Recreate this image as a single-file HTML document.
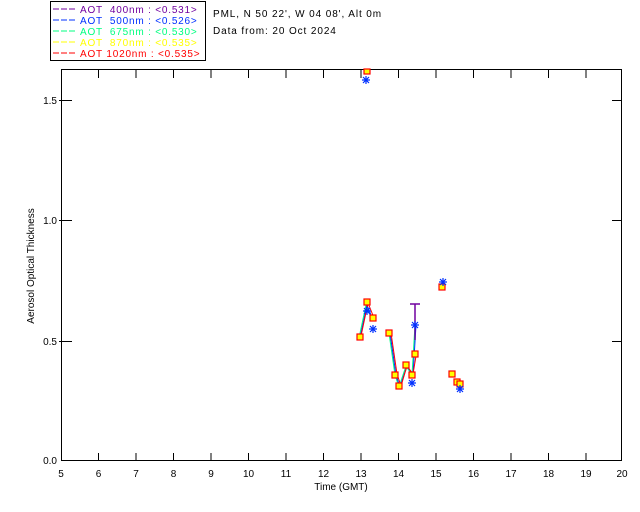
<!DOCTYPE html>
<html><head><style>
body{margin:0;background:#fff;width:640px;height:512px;overflow:hidden}
svg{display:block}
text{font-family:"Liberation Sans",sans-serif;font-size:10px}
</style></head><body>
<svg width="640" height="512" viewBox="0 0 640 512">
<rect x="50.5" y="1.5" width="155" height="59" fill="none" stroke="#000"/>
<g font-size="10" letter-spacing="0.8">
<line x1="53" y1="9" x2="75" y2="9" stroke="#70009f" stroke-dasharray="6,2"/><text x="80" y="13" fill="#70009f" xml:space="preserve">AOT  400nm : &lt;0.531&gt;</text>
<line x1="53" y1="20" x2="75" y2="20" stroke="#0030ff" stroke-dasharray="6,2"/><text x="80" y="24" fill="#0030ff" xml:space="preserve">AOT  500nm : &lt;0.526&gt;</text>
<line x1="53" y1="31" x2="75" y2="31" stroke="#00ff80" stroke-dasharray="6,2"/><text x="80" y="35" fill="#00ff80" xml:space="preserve">AOT  675nm : &lt;0.530&gt;</text>
<line x1="53" y1="42" x2="75" y2="42" stroke="#ffff00" stroke-dasharray="6,2"/><text x="80" y="46" fill="#ffff00" xml:space="preserve">AOT  870nm : &lt;0.535&gt;</text>
<line x1="53" y1="53" x2="75" y2="53" stroke="#ff0000" stroke-dasharray="6,2"/><text x="80" y="57" fill="#ff0000" xml:space="preserve">AOT 1020nm : &lt;0.535&gt;</text>
</g>
<g letter-spacing="0.9">
<text x="213" y="17">PML, N 50 22', W 04 08', Alt 0m</text>
<text x="213" y="34">Data from: 20 Oct 2024</text>
</g>
<rect x="61.5" y="69.5" width="560" height="391" fill="none" stroke="#000"/>
<g stroke="#000">
<path d="M98.5 461v-8M136 461v-8M173.5 461v-8M211 461v-8M248.5 461v-8M286 461v-8M323.5 461v-8M361 461v-8M398.5 461v-8M436 461v-8M473.5 461v-8M511 461v-8M548.5 461v-8M586 461v-8"/>
<path d="M98.5 70v8M136 70v8M173.5 70v8M211 70v8M248.5 70v8M286 70v8M323.5 70v8M361 70v8M398.5 70v8M436 70v8M473.5 70v8M511 70v8M548.5 70v8M586 70v8"/>
<path d="M59 100.5h13M59 220.5h13M59 341.5h13M612 100.5h10M612 220.5h10M612 341.5h10"/>
</g>
<g text-anchor="end"><text x="57" y="104">1.5</text><text x="57" y="224">1.0</text><text x="57" y="345">0.5</text><text x="57" y="464">0.0</text></g>
<g text-anchor="middle">
<text x="61" y="477">5</text><text x="98.5" y="477">6</text><text x="136" y="477">7</text><text x="173.5" y="477">8</text><text x="211" y="477">9</text><text x="248.5" y="477">10</text><text x="286" y="477">11</text><text x="323.5" y="477">12</text><text x="361" y="477">13</text><text x="398.5" y="477">14</text><text x="436" y="477">15</text><text x="473.5" y="477">16</text><text x="511" y="477">17</text><text x="548.5" y="477">18</text><text x="586" y="477">19</text><text x="622" y="477">20</text>
<text x="341" y="490">Time (GMT)</text>
</g>
<text transform="translate(34,266) rotate(-90)" text-anchor="middle">Aerosol Optical Thickness</text>
<g fill="none" stroke-width="1">
<polyline points="359,338 366,305 372,320" stroke="#00ff80"/>
<polyline points="389,333 395,375 399,387 406,366 412,375 415,325" stroke="#00ff80"/>
<polyline points="360,338 367,305 373,320" stroke="#0030ff"/>
<polyline points="390,333 396,375 400,387 407,366 413,375 416,325" stroke="#0030ff"/>
<polyline points="361,336 368,303 374,318" stroke="#ff0000"/>
<polyline points="391,333 397,374 401,386 407,366 413,374 416,356" stroke="#ff0000"/>
<line x1="415" y1="304" x2="415" y2="340" stroke="#70009f" stroke-width="1.5"/>
<line x1="410" y1="304" x2="420" y2="304" stroke="#70009f" stroke-width="1.5"/>
</g>
<g fill="#ff0" stroke="#f00" stroke-width="1.2">
<rect x="364" y="69" width="6" height="5"/>
<rect x="357" y="334" width="6" height="6"/><rect x="364" y="299" width="6" height="6"/><rect x="370" y="315" width="6" height="6"/>
<rect x="386" y="330" width="6" height="6"/><rect x="392" y="372" width="6" height="6"/><rect x="396" y="383" width="6" height="6"/>
<rect x="403" y="362" width="6" height="6"/><rect x="409" y="372" width="6" height="6"/><rect x="412" y="351" width="6" height="6"/>
<rect x="439" y="284" width="6" height="6"/><rect x="449" y="371" width="6" height="6"/><rect x="454" y="379" width="6" height="6"/><rect x="457" y="381" width="6" height="6"/>
</g>
<g stroke="#0030ff" stroke-width="1.2">
<path d="M363 77l6 6M369 77l-6 6M366 76v8M362 80h8"/>
<path d="M440 279l6 6M446 279l-6 6M443 278v8M439 282h8"/>
<path d="M412 322l6 6M418 322l-6 6M415 321v8M411 325h8"/>
<path d="M370 326l6 6M376 326l-6 6M373 325v8M369 329h8"/>
<path d="M409 380l6 6M415 380l-6 6M412 379v8M408 383h8"/>
<path d="M457 386l6 6M463 386l-6 6M460 385v8M456 389h8"/>
<path d="M364 308l6 6M370 308l-6 6M367 307v8M363 311h8"/>
</g>
</svg>
</body></html>
